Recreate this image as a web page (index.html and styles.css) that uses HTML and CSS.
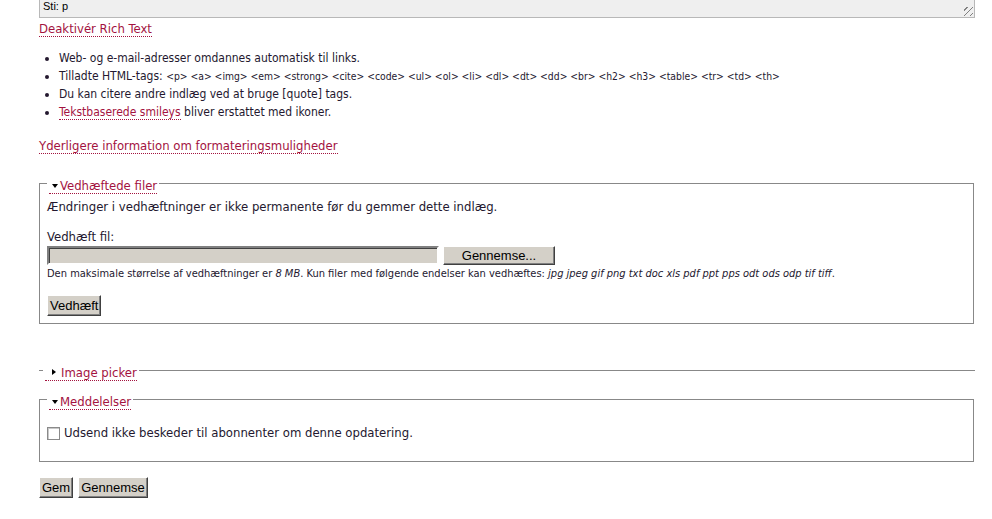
FILE: index.html
```html
<!DOCTYPE html>
<html>
  <head>
    <title>Rediger indlæg</title>
    <link rel="stylesheet" href="styles.css">
  </head>
  <body>
    <div class="page">
      <div class="pathbar">
        Sti: p
        <span class="grip"></span>
      </div>
      <a class="toggle" href="#">Deaktivér Rich Text</a>

      <ul class="tips">
        <li>Web- og e-mail-adresser omdannes automatisk til links.</li>
        <li>Tilladte HTML-tags: <span class="tags">&lt;p&gt; &lt;a&gt; &lt;img&gt; &lt;em&gt; &lt;strong&gt; &lt;cite&gt; &lt;code&gt; &lt;ul&gt; &lt;ol&gt; &lt;li&gt; &lt;dl&gt; &lt;dt&gt; &lt;dd&gt; &lt;br&gt; &lt;h2&gt; &lt;h3&gt; &lt;table&gt; &lt;tr&gt; &lt;td&gt; &lt;th&gt;</span></li>
        <li>Du kan citere andre indlæg ved at bruge [quote] tags.</li>
        <li><a href="#">Tekstbaserede smileys</a> bliver erstattet med ikoner.</li>
      </ul>

      <p class="more"><a href="#">Yderligere information om formateringsmuligheder</a></p>

      <fieldset class="group attachments">
        <legend><a class="legend-link open" href="#">Vedhæftede filer</a></legend>
        <p class="note">Ændringer i vedhæftninger er ikke permanente før du gemmer dette indlæg.</p>
        <label class="field-label" for="upload">Vedhæft fil:</label>
        <div class="file-row">
          <span class="file-box" id="upload"></span>
          <button class="btn browse" type="button">Gennemse...</button>
        </div>
        <p class="desc">Den maksimale størrelse af vedhæftninger er <em>8 MB</em>. Kun filer med følgende endelser kan vedhæftes: <em>jpg jpeg gif png txt doc xls pdf ppt pps odt ods odp tif tiff</em>.</p>
        <button class="btn attach" type="button">Vedhæft</button>
      </fieldset>

      <fieldset class="group collapsed">
        <legend><a class="legend-link closed" href="#">Image picker</a></legend>
      </fieldset>

      <fieldset class="group notify">
        <legend><a class="legend-link open" href="#">Meddelelser</a></legend>
        <label class="check-row">
          <span class="checkbox"></span>
          Udsend ikke beskeder til abonnenter om denne opdatering.
        </label>
      </fieldset>

      <div class="actions">
        <button class="btn" type="submit">Gem</button>
        <button class="btn" type="button">Gennemse</button>
      </div>
    </div>
  </body>
</html>
```

FILE: styles.css
```css
body {
  margin: 0;
  padding: 0;
  background: #fff;
  color: #24182f;
  font-family: "DejaVu Sans Condensed", "DejaVu Sans", sans-serif;
  font-size: 13px;
}

a {
  color: #a3133f;
  text-decoration: none;
  border-bottom: 1px dotted #a3133f;
}

.page {
  width: 936px;
  margin-left: 39px;
}

/* editor path bar (bottom of the rich text box) */
.pathbar {
  position: relative;
  height: 17px;
  line-height: 13px;
  padding-left: 3px;
  background: #efefef;
  border: 1px solid #b8b8b8;
  border-top: none;
  font-family: "Liberation Sans", sans-serif;
  font-size: 11px;
  color: #000;
}

.grip {
  position: absolute;
  right: 1px;
  bottom: 1px;
  width: 9px;
  height: 9px;
  background: repeating-linear-gradient(135deg, transparent 0 2px, #808080 2px 3px, transparent 3px 4px);
}

.toggle {
  display: inline-block;
  margin-top: 3px;
  line-height: 15px;
}

.tips {
  margin: 12px 0 0;
  padding-left: 20px;
  font-size: 12px;
  line-height: 18px;
}

.tags {
  font-size: 10.3px;
}

.more {
  margin: 17px 0 0;
  line-height: 15px;
}

.group {
  margin: 19px 1px 0 0;
  padding: 0 7px 7px;
  border: 1px solid #888;
}

.group legend {
  padding: 6px 2px 0;
  line-height: 15px;
}

.legend-link {
  position: relative;
  display: inline-block;
  padding-left: 11px;
}

.legend-link::before {
  content: "";
  position: absolute;
  left: 3px;
  top: 6px;
  border: 3px solid transparent;
}

.legend-link.open::before {
  border-top: 4px solid #000;
  border-bottom: none;
}

.legend-link.closed {
  padding-left: 16px;
}

.legend-link.closed::before {
  top: 4px;
  left: 7px;
  border-left: 4px solid #000;
  border-right: none;
}

.note {
  margin: 4px 0 0;
  line-height: 18px;
}

.field-label {
  display: block;
  margin-top: 12px;
  line-height: 18px;
}

.file-row {
  display: flex;
  gap: 4px;
  height: 19px;
}

.file-box {
  width: 388px;
  background: #d4d0c8;
  border: 2px solid;
  border-color: #808080 #fff #fff #808080;
  box-shadow: inset 1px 1px #404040;
}

.desc {
  margin: 1px 0 0;
  font-size: 11px;
  line-height: 16px;
}

.btn {
  height: 21px;
  padding: 0 2px;
  background: #d4d0c8;
  border: 1px solid;
  border-color: #fff #404040 #404040 #fff;
  box-shadow: inset -1px -1px #808080;
  font-family: "Liberation Sans", sans-serif;
  font-size: 13px;
  color: #000;
}

.attach {
  margin-top: 13px;
}

.browse {
  width: 112px;
  height: 19px;
}

.collapsed {
  margin: 35px 0 0;
  padding: 0 0 0 4px;
  border-width: 1px 0 0;
}

.notify {
  margin-top: 7px;
  padding-bottom: 19px;
}

.check-row {
  display: flex;
  align-items: center;
  gap: 4px;
  margin-top: 14px;
  line-height: 18px;
}

.checkbox {
  width: 11px;
  height: 11px;
  background: #fff;
  border: 1px solid #8a8a8a;
  box-shadow: inset 1px 1px #c8c8c8;
}

.actions {
  display: flex;
  gap: 5px;
  margin-top: 15px;
}
```
